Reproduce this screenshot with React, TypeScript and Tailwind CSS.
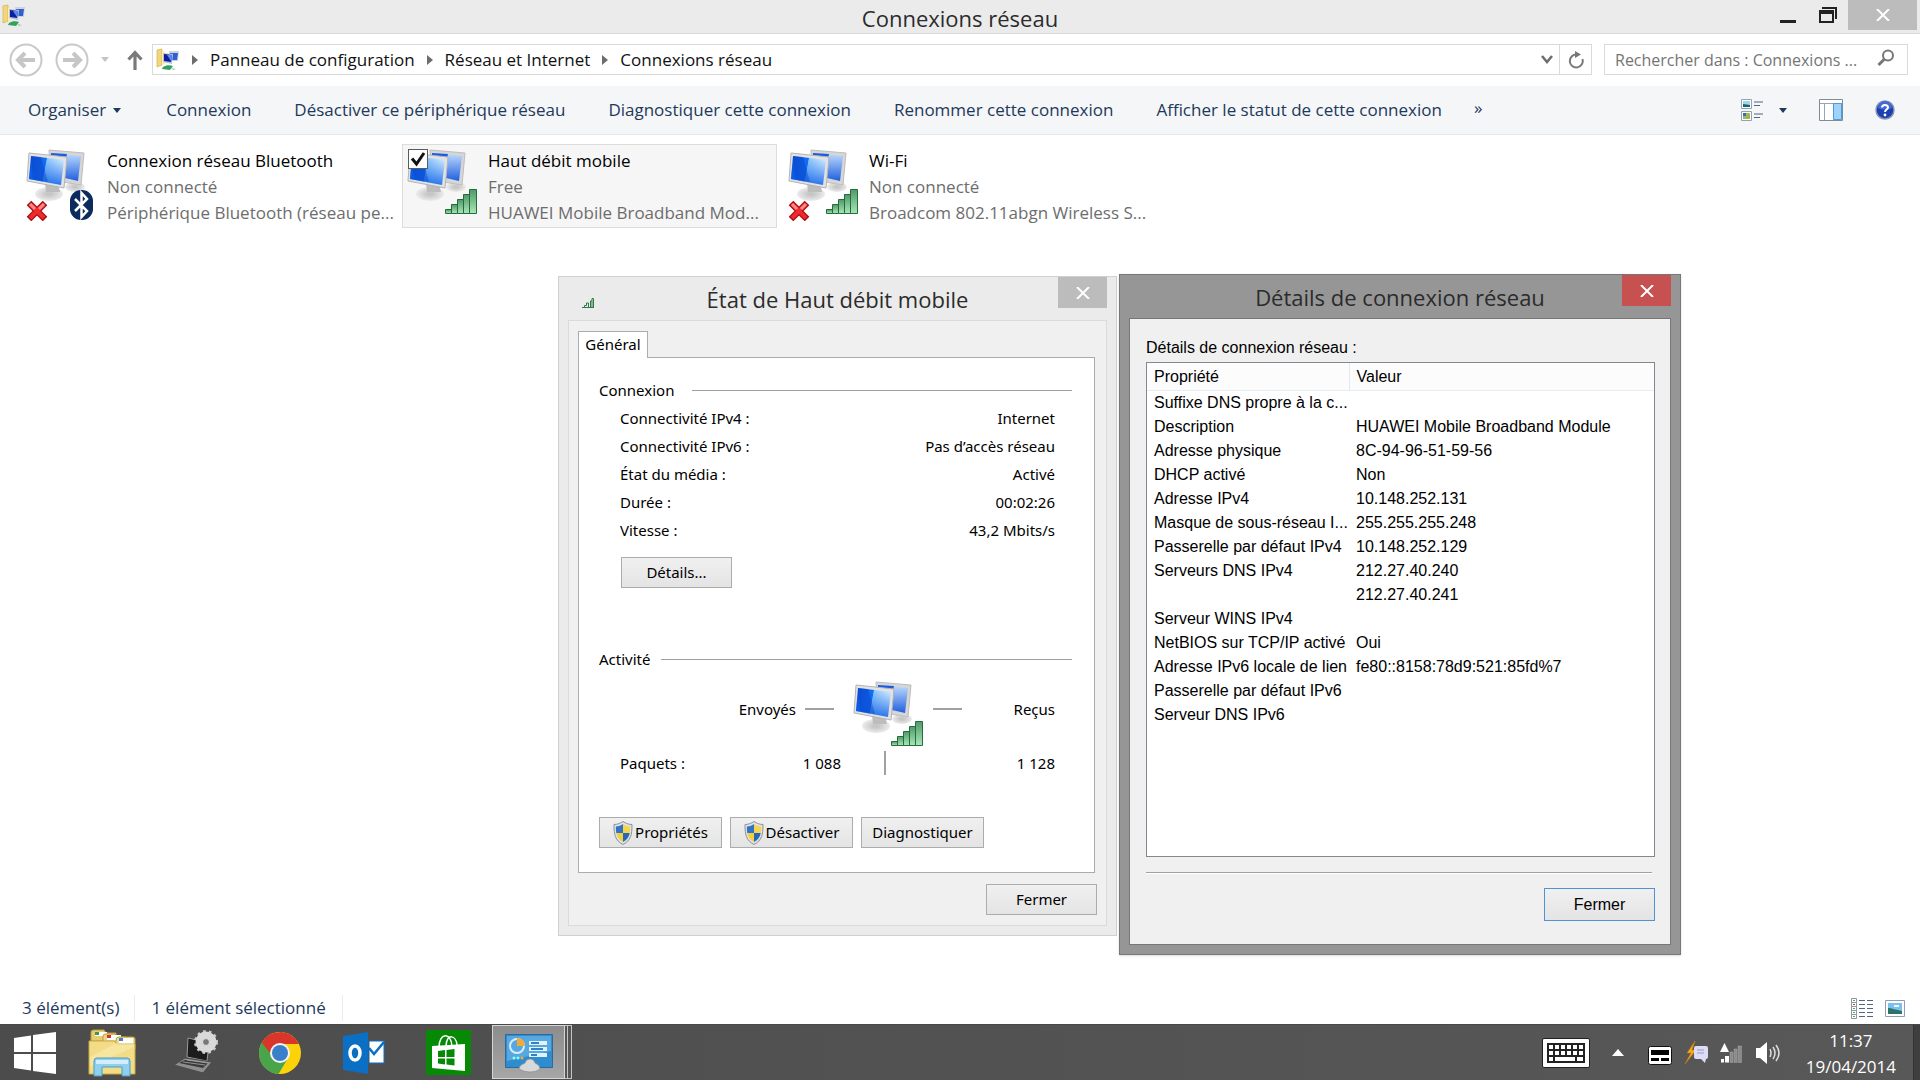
import { useState, type ReactNode } from "react";

const TOOLBAR = [
  "Connexion",
  "Désactiver ce périphérique réseau",
  "Diagnostiquer cette connexion",
  "Renommer cette connexion",
  "Afficher le statut de cette connexion",
];

const CRUMBS = ["Panneau de configuration", "Réseau et Internet", "Connexions réseau"];

type Badge = "bluetooth" | "bars";

type Connection = {
  name: string;
  status: string;
  device: string;
  badge: Badge;
  offline: boolean;
};

const CONNECTIONS: Connection[] = [
  { name: "Connexion réseau Bluetooth", status: "Non connecté", device: "Périphérique Bluetooth (réseau pe...", badge: "bluetooth", offline: true },
  { name: "Haut débit mobile", status: "Free", device: "HUAWEI Mobile Broadband Mod...", badge: "bars", offline: false },
  { name: "Wi-Fi", status: "Non connecté", device: "Broadcom 802.11abgn Wireless S...", badge: "bars", offline: true },
];

const STATUS_ROWS = [
  ["Connectivité IPv4 :", "Internet"],
  ["Connectivité IPv6 :", "Pas d’accès réseau"],
  ["État du média :", "Activé"],
  ["Durée :", "00:02:26"],
  ["Vitesse :", "43,2 Mbits/s"],
];

const DETAIL_ROWS = [
  ["Suffixe DNS propre à la c...", ""],
  ["Description", "HUAWEI Mobile Broadband Module"],
  ["Adresse physique", "8C-94-96-51-59-56"],
  ["DHCP activé", "Non"],
  ["Adresse IPv4", "10.148.252.131"],
  ["Masque de sous-réseau I...", "255.255.255.248"],
  ["Passerelle par défaut IPv4", "10.148.252.129"],
  ["Serveurs DNS IPv4", "212.27.40.240"],
  ["", "212.27.40.241"],
  ["Serveur WINS IPv4", ""],
  ["NetBIOS sur TCP/IP activé", "Oui"],
  ["Adresse IPv6 locale de lien", "fe80::8158:78d9:521:85fd%7"],
  ["Passerelle par défaut IPv6", ""],
  ["Serveur DNS IPv6", ""],
];

/* ---------- icons ---------- */

function NetworkIcon({ badge, offline }: { badge: Badge; offline?: boolean }) {
  return (
    <svg viewBox="0 0 72 72" className="size-[72px] shrink-0" aria-hidden="true">
      <defs>
        <linearGradient id="net-front" x1="0" y1="0" x2="1" y2="0.15">
          <stop offset="0" stopColor="#0a4fdc" />
          <stop offset="0.5" stopColor="#1470f4" />
          <stop offset="0.52" stopColor="#8cc8fc" />
          <stop offset="1" stopColor="#d8edfe" />
        </linearGradient>
        <linearGradient id="net-shade" x1="0" y1="0" x2="0" y2="1">
          <stop offset="0.1" stopColor="#0b5fe8" stopOpacity="0" />
          <stop offset="1" stopColor="#0b5fe8" stopOpacity="0.85" />
        </linearGradient>
        <linearGradient id="net-back" x1="0" y1="0" x2="0" y2="1">
          <stop offset="0" stopColor="#c2dcfb" />
          <stop offset="1" stopColor="#1f5fe0" />
        </linearGradient>
        <linearGradient id="net-bars" x1="0" y1="0" x2="0" y2="1">
          <stop offset="0" stopColor="#4f9a68" />
          <stop offset="1" stopColor="#a9e6b8" />
        </linearGradient>
        <radialGradient id="net-stand">
          <stop offset="0.2" stopColor="#c6c6c6" />
          <stop offset="1" stopColor="#ececec" />
        </radialGradient>
      </defs>
      <ellipse cx="50" cy="38" rx="10" ry="5" fill="url(#net-stand)" />
      <path d="M24 1 59 4 56 36 26 31z" fill="#d6d6d6" stroke="#bdbdbd" />
      <path d="M26 4 56 7 53 32 40 29z" fill="url(#net-back)" />
      <path d="M26 4 42 5 41 9 26 8z" fill="#1b5be0" />
      <ellipse cx="24" cy="45" rx="14" ry="7" fill="url(#net-stand)" />
      <path d="M20 34h13l2 9H21z" fill="#bdbdbd" />
      <path d="M4 4 42 8 39 39 2 32z" fill="#e2e2e2" stroke="#b4b4b4" />
      <path d="M6 7 39 11 36 36 4 30z" fill="url(#net-front)" />
      <path d="M6 7 39 11 36 36 4 30z" fill="url(#net-shade)" />
      <path d="M6 7 16 8l7 25L8 30z" fill="#0a3fc0" fillOpacity="0.4" />
      {badge === "bars" && (
        <g fill="url(#net-bars)" stroke="#256b3d">
          <path d="M39.500 60.500h6v4h-6z" />
          <path d="M45.500 55.500h6v9h-6z" />
          <path d="M51.500 50.500h6v14h-6z" />
          <path d="M57.500 45.500h6v19h-6z" />
          <path d="M63.500 40.500h7v24h-7z" />
        </g>
      )}
      {badge === "bluetooth" && (
        <>
          <rect x="45" y="41" width="23" height="30" rx="11" fill="#0b2a5e" />
          <path d="M50 50 62 62 56.500 68V44l5.500 6-12 12" fill="none" stroke="#fff" strokeWidth="2.500" />
        </>
      )}
      {offline && (
        <>
          <path d="M4 54 20 70M20 54 4 70" stroke="#a80d12" strokeWidth="6.500" />
          <path d="M5 55 19 69M19 55 5 69" stroke="#ee2a2d" strokeWidth="4" />
          <path d="M5 55l5 5M19 55l-5 5" stroke="#f88" strokeWidth="3" />
        </>
      )}
    </svg>
  );
}

function FolderNetIcon() {
  return (
    <svg viewBox="0 0 24 24" className="size-6 shrink-0" aria-hidden="true">
      <path d="M1 2 6 1v16l-5 2z" fill="#f1d67c" stroke="#d3b14e" strokeWidth="0.700" />
      <path d="M6 4l3-1v13l-3 1z" fill="#fbecb0" />
      <path d="M13 3h10l-1 10h-9z" fill="#ccd3df" />
      <path d="M14 5h8l-1 7h-7z" fill="#2f5fd0" />
      <path d="M7 5 17 6l-1 10-9-2z" fill="#b8c2d4" />
      <path d="M8 6 16 7l-1 7-7-1z" fill="#0b1fa0" />
      <path d="M11 7 16 7l-1 6z" fill="#5a8df0" />
      <path d="M7 19c3-2 7-2 10-1l-3 4-8-1z" fill="#2fa35a" />
      <path d="M15 20l5 1-3 1z" fill="#9bc9aa" />
    </svg>
  );
}

function CloseX() {
  return (
    <svg viewBox="0 0 14 12" className="h-3 w-3.5" aria-hidden="true">
      <path d="M1 0 13 12M13 0 1 12" stroke="#fff" strokeWidth="2" />
    </svg>
  );
}

function Shield() {
  return (
    <svg viewBox="0 0 20 24" className="h-6 w-5 shrink-0" aria-hidden="true">
      <path d="M10 .5c3 2 6 3 9 3 0 10-1 16-9 20C2 19.500 1 13.500 1 3.500c3 0 6-1 9-3z" fill="#dfe3e6" stroke="#8b9298" />
      <path d="M10 3v9H3.300C3 10 2.800 8 2.900 5.500 6 5.200 8 4.500 10 3z" fill="#2f74c8" />
      <path d="M10 3v9h6.700c.3-2 .5-4 .4-6.500C14 5.200 12 4.500 10 3z" fill="#f6d44c" />
      <path d="M10 12v9c-4-2.200-6-5-6.700-9z" fill="#f3cf42" />
      <path d="M10 12v9c4-2.200 6-5 6.700-9z" fill="#2767b8" />
    </svg>
  );
}

function CaretDown({ color }: { color: string }) {
  return (
    <svg viewBox="0 0 8 5" className="h-[5px] w-2" aria-hidden="true">
      <path d="M0 0h8L4 5z" fill={color} />
    </svg>
  );
}

function NavCircle({ label, flip }: { label: string; flip?: boolean }) {
  return (
    <button aria-label={label} className="block size-[34px] shrink-0">
      <svg viewBox="0 0 34 34" className={flip ? "block size-[34px] -scale-x-100" : "block size-[34px]"}>
        <circle cx="17" cy="17" r="15.500" fill="none" stroke="#c9c9c9" strokeWidth="2" />
        <path d="M9 17h17M16 10l-7 7 7 7" fill="none" stroke="#c6c6c6" strokeWidth="4" />
      </svg>
    </button>
  );
}

/* ---------- main window ---------- */

function TitleBar() {
  return (
    <header className="grid h-[34px] grid-cols-[1fr_auto_1fr] border-b border-[#d8d8d8] bg-[#ebebeb]">
      <div className="pt-1 pl-[2px]">
        <FolderNetIcon />
      </div>
      <h1 className="text-[22px] leading-9 text-[#2b2b2b]">Connexions réseau</h1>
      <div className="flex justify-end pr-[3px]">
        <button aria-label="Réduire" className="flex h-[30px] w-10 items-center justify-center">
          <span className="mt-3 h-[3px] w-4 bg-[#222]" />
        </button>
        <button aria-label="Restaurer" className="flex h-[30px] w-10 items-center justify-center">
          <svg viewBox="0 0 18 16" className="h-4 w-[18px]">
            <path d="M3 1h14v11" fill="none" stroke="#222" strokeWidth="2" />
            <path d="M1 4h13v11H1z" fill="none" stroke="#222" strokeWidth="2" />
            <path d="M0 3h15v4H0z" fill="#222" />
          </svg>
        </button>
        <button aria-label="Fermer" className="flex h-[30px] w-[69px] items-center justify-center bg-[#bcbcbc]">
          <CloseX />
        </button>
      </div>
    </header>
  );
}

function AddressRow() {
  return (
    <div className="flex h-[52px] items-center pr-3 pb-px pl-[9px]">
      <NavCircle label="Précédent" />
      <div className="ml-3">
        <NavCircle label="Suivant" flip />
      </div>
      <button aria-label="Emplacements récents" className="ml-2 flex w-4 justify-center">
        <CaretDown color="#c4c4c4" />
      </button>
      <button aria-label="Dossier parent" className="ml-3.5">
        <svg viewBox="0 0 16 20" className="h-5 w-4">
          <path d="M8 20V3M1.500 9.500 8 2.500l6.500 7" fill="none" stroke="#7a7a7a" strokeWidth="3.200" />
        </svg>
      </button>
      <nav className="ml-[9px] flex h-[31px] flex-1 items-center border border-[#d9d9d9] bg-white pl-[3px]">
        <FolderNetIcon />
        {CRUMBS.map((crumb) => (
          <span key={crumb} className="flex items-center">
            <svg viewBox="0 0 6 10" className="mr-3 ml-3 h-2.5 w-1.5" aria-hidden="true">
              <path d="M0 0v10l6-5z" fill="#6d6d6d" />
            </svg>
            <a href="#" className="text-[17px] leading-7 text-[#111]">{crumb}</a>
          </span>
        ))}
        <button aria-label="Adresses précédentes" className="mr-1.5 ml-auto">
          <svg viewBox="0 0 12 9" className="h-[9px] w-3">
            <path d="M1 1l5 6 5-6" fill="none" stroke="#6d6d6d" strokeWidth="2.500" />
          </svg>
        </button>
        <button aria-label="Actualiser" className="flex h-full w-8 items-center justify-center border-l border-[#d9d9d9]">
          <svg viewBox="0 0 18 18" className="size-[18px]">
            <path d="M10 3.500A6.500 6.500 0 1 0 15.500 8" fill="none" stroke="#777" strokeWidth="2" />
            <path d="M8 0v7l6-3.500z" fill="#777" />
          </svg>
        </button>
      </nav>
      <div className="ml-3 flex h-[31px] w-[304px] items-center border border-[#d9d9d9] bg-white pr-3 pl-2.5">
        <input
          type="text"
          aria-label="Rechercher"
          placeholder="Rechercher dans : Connexions ..."
          className="min-w-0 flex-1 text-[16px] outline-none placeholder:text-[#757575]"
        />
        <svg viewBox="0 0 18 18" className="mb-1 size-[18px] shrink-0" aria-hidden="true">
          <circle cx="11" cy="6.500" r="5" fill="none" stroke="#777" strokeWidth="2" />
          <path d="M7.500 10 1.500 16" stroke="#777" strokeWidth="3" />
        </svg>
      </div>
    </div>
  );
}

function CommandBar() {
  return (
    <div className="flex h-[49px] items-center border-b border-[#e5e7ea] bg-[#f4f6f8] pr-[25px] pl-7 text-[17px] text-[#1e395b]">
      <button className="flex items-center gap-[7px]">
        Organiser
        <CaretDown color="#1e395b" />
      </button>
      <div className="ml-[45px] flex gap-[43px]">
        {TOOLBAR.map((label) => (
          <button key={label}>{label}</button>
        ))}
      </div>
      <button aria-label="Autres commandes" className="ml-8 pb-1">»</button>

      <button aria-label="Changer l’affichage" className="ml-auto flex items-center gap-[15px]">
        <svg viewBox="0 0 23 22" className="h-[22px] w-[23px]">
          <path d="M.5.5h10v9H.5zM.5 12.500h10v9H.5z" fill="#fff" stroke="#8fa3b4" />
          <path d="M2 2h7v6H2z" fill="#9fd6ea" />
          <path d="M2 5l7 1v2H2z" fill="#20606e" />
          <path d="M2 14h7v6H2z" fill="#8fc06a" />
          <path d="M2 14h3v3H2z" fill="#4468b0" />
          <path d="M6 16h3v3H6z" fill="#c8a040" />
          <path d="M13 3h9M13 6.500h6M13 15h9M13 18.500h6" stroke="#51657c" />
        </svg>
        <CaretDown color="#1e395b" />
      </button>
      <button aria-label="Volet de visualisation" className="ml-8">
        <svg viewBox="0 0 24 22" className="h-[22px] w-6">
          <path d="M.5.5h23v21H.5z" fill="#fff" stroke="#7f8b97" />
          <path d="M1 4.500h22M5.500 5v16" stroke="#9aa5b0" />
          <path d="M14.500 4.500h8v16h-8z" fill="#9fd3fa" stroke="#4b9be0" />
        </svg>
      </button>
      <button aria-label="Aide" className="ml-8">
        <svg viewBox="0 0 20 20" className="size-5">
          <circle cx="10" cy="10" r="9" fill="#1c3fb4" stroke="#8893b0" strokeWidth="1.500" />
          <path d="M3 8a7 7 0 0 1 14 0c-4 2-10 2-14 0z" fill="#4468d4" />
          <path d="M7 7.500C7 4 13 4 13 7.500c0 2-3 2.200-3 4.500" fill="none" stroke="#fff" strokeWidth="2" />
          <circle cx="10" cy="15" r="1.400" fill="#fff" />
        </svg>
      </button>
    </div>
  );
}

function ConnectionItem({ item, selected, onToggle }: { item: Connection; selected: boolean; onToggle: () => void }) {
  return (
    <li
      className={
        selected
          ? "relative flex h-[84px] w-[375px] border border-[#dcdcdc] bg-[#f6f6f6] pt-[3px] pl-[3px]"
          : "relative flex h-[84px] w-[375px] border border-transparent pt-[3px] pl-[3px]"
      }
    >
      <div className="pt-px">
        <NetworkIcon badge={item.badge} offline={item.offline} />
      </div>
      {selected && (
        <label className="absolute top-1 left-[5px] flex">
          <input type="checkbox" aria-label={item.name} checked onChange={onToggle} className="size-5 appearance-none border border-[#5a5a5a] bg-white" />
          <svg viewBox="0 0 20 20" className="pointer-events-none absolute inset-0 size-5">
            <path d="M4 9.500l4.500 5.500L16 4" fill="none" stroke="#111" strokeWidth="3" />
          </svg>
        </label>
      )}
      <div className="ml-2.5 text-[17px] leading-[26px] text-[#6d6d6d]" onClick={onToggle}>
        <p className="text-black">{item.name}</p>
        <p>{item.status}</p>
        <p className="whitespace-nowrap">{item.device}</p>
      </div>
    </li>
  );
}

function StatusBar() {
  return (
    <footer className="flex h-8 items-center pr-[15px] pl-[22px] text-[17px] text-[#1e395b]">
      <span className="border-r border-[#ececec] pr-[15px]">3 élément(s)</span>
      <span className="border-r border-[#ececec] px-4">1 élément sélectionné</span>
      <button aria-label="Détails" className="ml-auto">
        <svg viewBox="0 0 22 21" className="h-[21px] w-[22px]">
          {[0, 4, 8, 12, 16].map((y) => (
            <g key={y}>
              <path d={`M.5 ${y + 0.5}h5v4h-5z`} fill="#fff" stroke="#8c97a3" />
              <path d={`M2 ${y + 2}h2v1H2z`} fill={y === 4 ? "#c43c3c" : "#57a05c"} />
              <path d={`M8 ${y + 2.5}h6M16 ${y + 2.5}h6`} stroke="#51657c" />
            </g>
          ))}
        </svg>
      </button>
      <button aria-label="Grandes icônes" className="ml-3">
        <svg viewBox="0 0 20 17" className="h-[17px] w-5">
          <path d="M.5.5h19v16H.5z" fill="#fff" stroke="#8ba0b8" />
          <path d="M3 3h14v11H3z" fill="#7cc0f0" />
          <path d="M3 8c4 0 8 2 14 3v3H3z" fill="#2c7468" />
          <path d="M9 5h5v2H9z" fill="#e8f6ff" />
        </svg>
      </button>
    </footer>
  );
}

/* ---------- dialogs ---------- */

function DialogButton({ children, className }: { children: ReactNode; className: string }) {
  return (
    <button className={`flex items-center justify-center border bg-linear-to-b from-[#f0f0f0] to-[#e4e4e4] ${className}`}>
      {children}
    </button>
  );
}

function GroupTitle({ children, className }: { children: ReactNode; className?: string }) {
  return (
    <h3 className={`flex h-7 items-center ${className ?? ""}`}>
      {children}
      <span className="h-px flex-1 bg-[#a0a0a0]" />
    </h3>
  );
}

function StatusDialog() {
  return (
    <section
      role="dialog"
      aria-label="État de Haut débit mobile"
      className="absolute top-[276px] left-[558px] w-[559px] border border-[#d0d0d0] bg-[#ebebeb] px-[9px] pb-[9px] font-['Noto_Sans',sans-serif] text-[15px] text-black"
    >
      <header className="grid h-[43px] grid-cols-[49px_1fr_49px]">
        <svg viewBox="0 0 12 10" className="mt-[21px] ml-3.5 h-2.5 w-3" aria-hidden="true">
          <path d="M0 9.500h12M2.500 9V7.500h2V5h2v4M8.500 9V3h1.500v6M10 3V.5h1.500V9" fill="none" stroke="#2f7a48" />
        </svg>
        <h2 className="pt-0.5 text-center font-['Open_Sans',sans-serif] text-[22px] leading-10 text-[#2b2b2b]">État de Haut débit mobile</h2>
        <button aria-label="Fermer la fenêtre" className="flex h-[31px] items-center justify-center bg-[#bcbcbc]">
          <CloseX />
        </button>
      </header>
      <div className="border border-[#dadada] bg-[#f0f0f0] py-2.5 pr-[9px] pl-[9px]">
        <button role="tab" aria-selected className="relative -mb-px flex h-[27px] w-[70px] items-center justify-center border border-b-0 border-[#acacac] bg-white pb-0.5">
          Général
        </button>
        <div className="mr-0.5 border border-[#acacac] bg-white pt-[18px] pr-[22px] pb-6 pl-5">
          <GroupTitle>
            <span className="mr-[18px]">Connexion</span>
          </GroupTitle>
          <dl className="pr-[17px] pl-[21px]">
            {STATUS_ROWS.map(([label, value]) => (
              <div key={label} className="flex h-7 items-center justify-between">
                <dt>{label}</dt>
                <dd>{value}</dd>
              </div>
            ))}
          </dl>
          <DialogButton className="mt-[13px] ml-[22px] h-[31px] w-[111px] border-[#acacac]">Détails...</DialogButton>

          <GroupTitle className="mt-[57px]">
            <span className="mr-[11px]">Activité</span>
          </GroupTitle>
          <div className="grid h-[76px] grid-cols-[235px_99px_1fr] pr-[17px]">
            <div className="flex h-[72px] items-center justify-end gap-[9px]">
              Envoyés
              <span className="h-0.5 w-[29px] bg-[#a0a0a0]" />
            </div>
            <div className="flex pt-2 pl-[18px]">
              <NetworkIcon badge="bars" />
            </div>
            <div className="flex h-[72px] items-center justify-between">
              <span className="h-0.5 w-[29px] bg-[#a0a0a0]" />
              Reçus
            </div>
          </div>
          <div className="grid h-7 grid-cols-[88px_133px_88px_1fr] items-center pr-[17px] pl-[21px]">
            <span>Paquets :</span>
            <span className="text-right">1 088</span>
            <span className="h-6 w-0.5 justify-self-center bg-[#a0a0a0]" />
            <span className="text-right">1 128</span>
          </div>
          <div className="mt-10 flex gap-2">
            <DialogButton className="h-[31px] w-[123px] border-[#acacac]">
              <Shield />
              <span className="ml-0.5">Propriétés</span>
            </DialogButton>
            <DialogButton className="h-[31px] w-[123px] border-[#acacac]">
              <Shield />
              <span className="ml-0.5">Désactiver</span>
            </DialogButton>
            <DialogButton className="h-[31px] w-[123px] border-[#acacac]">Diagnostiquer</DialogButton>
          </div>
        </div>
        <DialogButton className="mt-[11px] ml-auto h-[31px] w-[111px] border-[#acacac]">Fermer</DialogButton>
      </div>
    </section>
  );
}

function DetailsDialog() {
  return (
    <section
      role="dialog"
      aria-label="Détails de connexion réseau"
      className="absolute top-[274px] left-[1119px] w-[562px] border border-[#777] bg-[#969696] px-[9px] pb-[9px] font-['Liberation_Sans',Arial,sans-serif] text-[16px] text-black shadow-sm"
    >
      <header className="grid h-[43px] grid-cols-[49px_1fr_49px]">
        <h2 className="col-start-2 pt-0.5 text-center font-['Open_Sans',sans-serif] text-[22px] leading-10 text-[#2b2b2b]">Détails de connexion réseau</h2>
        <button aria-label="Fermer la fenêtre" className="flex h-[31px] items-center justify-center bg-[#c75050]">
          <CloseX />
        </button>
      </header>
      <div className="border border-[#777] bg-[#f0f0f0] pt-[17px] pr-[15px] pb-[23px] pl-4">
        <p className="h-6 leading-6">Détails de connexion réseau :</p>
        <div className="mt-0.5 h-[495px] border border-[#828790] bg-white">
          <table className="w-full table-fixed text-left">
            <thead>
              <tr className="h-[27px] border-b border-[#e6eef6] bg-[#fcfcfd]">
                <th className="w-[202px] border-r border-[#dfeaf4] pt-0.5 pr-0 pb-0 pl-[7px] font-normal">Propriété</th>
                <th className="pt-0.5 pr-0 pb-0 pl-[7px] font-normal">Valeur</th>
              </tr>
            </thead>
            <tbody>
              {DETAIL_ROWS.map(([label, value], i) => (
                <tr key={i} className="h-6 leading-6 whitespace-nowrap">
                  <td className="p-0 pl-[7px]">{label}</td>
                  <td className="p-0 pl-[7px]">{value}</td>
                </tr>
              ))}
            </tbody>
          </table>
        </div>
        <hr className="mt-[15px] mr-[3px] h-0.5 border-t border-b border-t-[#a0a0a0] border-b-white" />
        <DialogButton className="mt-3.5 ml-auto h-[33px] w-[111px] border-[#5292d4]">Fermer</DialogButton>
      </div>
    </section>
  );
}

/* ---------- taskbar ---------- */

function TaskButton({ label, children }: { label: string; children: ReactNode }) {
  return (
    <button aria-label={label} className="flex h-full w-[84px] items-center justify-center">
      {children}
    </button>
  );
}

function Taskbar() {
  return (
    <div className="flex h-14 items-stretch border-t border-[#484848] bg-linear-to-r from-[#4c4c4c] to-[#585858] text-white">
      <button aria-label="Démarrer" className="flex w-[70px] items-center justify-center">
        <svg viewBox="0 0 42 42" className="size-[42px]" fill="#fff">
          <path d="M0 6 17 3.500V20H0zM19 3 42 0v20H19zM0 22h17v16.500L0 36zM19 22h23v20l-23-3z" />
        </svg>
      </button>
      <TaskButton label="Explorateur de fichiers">
        <svg viewBox="0 0 48 48" className="size-12">
          <path d="M3 3q0-2 3-2h10l2 3h10v8H3z" fill="#e8cc74" stroke="#bf9b3c" />
          <path d="M7 3h12v4H7z" fill="#fff" />
          <path d="M7 3h4v3H7z" fill="#3a9a4a" />
          <path d="M15 7q0-2 3-2h9l3 3h8v6H15z" fill="#efd684" stroke="#bf9b3c" />
          <path d="M19 6h14v5H19z" fill="#fff" />
          <path d="M19 6h4v3h-4z" fill="#d0372f" />
          <path d="M28 11q0-3 3-3h14q2 0 2 2v10H28z" fill="#f2dd92" stroke="#bf9b3c" />
          <path d="M31 9h14v5H31z" fill="#fff" />
          <path d="M31 9h4v3h-4z" fill="#3a86c8" />
          <path d="M1 12h25l3 3h18v30H1z" fill="#f3dc87" stroke="#caa748" />
          <path d="M2 28 28 14h18v4L2 38z" fill="#fbefb8" fillOpacity="0.500" />
          <path d="M6 47V32q0-3 3-3h30q3 0 3 3v15h-8v-9H14v9z" fill="#8fd0ee" stroke="#4d9cc4" />
          <path d="M8 31h32v4H8z" fill="#d3eefa" />
        </svg>
      </TaskButton>
      <TaskButton label="Gestionnaire de périphériques">
        <svg viewBox="0 0 46 46" className="size-[46px]">
          <path d="M15 8 36 13 34 31 14 27z" fill="#1c1c1c" stroke="#9a9a9a" />
          <path d="M12 28 39 32 30 43 1 35z" fill="#8e8e8e" stroke="#4a4a4a" />
          <path d="M12 30 35 33 30 38 6 33z" fill="#3a3a3a" />
          <path d="M10 32l22 3M14 30l21 3" stroke="#a8a8a8" strokeWidth="0.800" />
          <circle cx="33" cy="12" r="10" fill="none" stroke="#c9c9c9" strokeWidth="4" strokeDasharray="2.500 3" />
          <circle cx="33" cy="12" r="7" fill="none" stroke="#d9d9d9" strokeWidth="7" />
          <circle cx="33" cy="12" r="3.500" fill="#777" stroke="#eee" />
        </svg>
      </TaskButton>
      <TaskButton label="Google Chrome">
        <svg viewBox="0 0 42 42" className="size-[42px]">
          <circle cx="21" cy="21" r="21" fill="#fcd209" />
          <path d="M21 0a21 21 0 0 1 18.600 12H21z" fill="#d9352a" />
          <path d="M2.800 10.500A21 21 0 0 0 19.500 42L29 26 21 21z" fill="#4aa54a" />
          <path d="M2.800 10.500A21 21 0 0 1 39.600 12H21q-9 1-10 9z" fill="#d9352a" />
          <circle cx="21" cy="21" r="10" fill="#f4f4f4" />
          <circle cx="21" cy="21" r="8" fill="#3b7fcb" />
        </svg>
      </TaskButton>
      <TaskButton label="Outlook">
        <svg viewBox="0 0 42 42" className="size-[42px]">
          <path d="M0 4 25 0v42L0 38z" fill="#0b6fc4" />
          <ellipse cx="12" cy="21" rx="5" ry="7" fill="none" stroke="#fff" strokeWidth="3.500" />
          <path d="M26 9h15v22H26z" fill="#fff" stroke="#0b6fc4" />
          <path d="M26 16l5 6 10-12" fill="none" stroke="#0b6fc4" strokeWidth="2.500" />
        </svg>
      </TaskButton>
      <TaskButton label="Windows Store">
        <svg viewBox="0 0 45 45" className="size-[45px]">
          <path d="M0 0h45v45H0z" fill="#068a06" />
          <path d="M13 18c0-16 12-16 13-2M20 16c1-13 10-11 11-1" fill="none" stroke="#fff" strokeWidth="1.500" />
          <path d="M6 16 39 14v27L6 38z" fill="#fff" />
          <path d="M12 21l7-1v7h-7zM20.500 20l8-1v8h-8zM12 28.500h7v6l-7-1zM20.500 28.500h8v7l-8-1z" fill="#068a06" />
        </svg>
      </TaskButton>
      <button aria-label="Panneau de configuration" className="mb-px ml-0.5 flex w-20">
        <span className="flex h-full w-[73px] items-center justify-center border border-[#d5d5d5] bg-linear-to-b from-[#8c8c8c] to-[#a6a6a6]">
          <svg viewBox="0 0 48 42" className="h-[42px] w-12">
            <path d="M.5 3.500h47v33H.5z" fill="#2f8ccf" stroke="#2b6a9c" />
            <path d="M2 5h44v15L2 30z" fill="#58a8e0" />
            <circle cx="12" cy="15" r="7" fill="none" stroke="#d6eefc" strokeWidth="2" />
            <path d="M12 15V7a8 8 0 0 1 8 8z" fill="#f3a83a" />
            <path d="M24 10h18v4H24zM24 16h18v4H24zM24 22h18v4H24z" fill="#dff1fc" />
            <path d="M26 11h8v2h-8zM26 17h12v2H26zM26 23h6v2h-6z" fill="#2f84c8" />
            <circle cx="9" cy="27" r="1.500" fill="#8ff" />
            <circle cx="13" cy="27" r="1.500" fill="#8ff" />
            <circle cx="17" cy="27" r="1.500" fill="#f3a83a" />
            <path d="M14 38q0-4 6-6 1-4 5-4t5 4q5 2 5 6-4 3-10 3t-11-3z" fill="#d9d9d9" stroke="#8a8a8a" strokeWidth="0.600" />
          </svg>
        </span>
        <span className="h-full w-[3px] border-y border-r border-[#c4c4c4] bg-[#555]" />
        <span className="h-full w-1 border-y border-r border-[#c4c4c4] bg-[#555]" />
      </button>

      <div className="ml-auto flex items-center">
        <button aria-label="Clavier tactile">
          <svg viewBox="0 0 48 30" className="h-[30px] w-12">
            <rect x="0.500" y="0.500" width="47" height="29" rx="1.500" fill="#fff" stroke="#222" />
            <path d="M5 5h38v20H5z" fill="#222" />
            <path d="M7 9h34M7 15h34" stroke="#fff" strokeWidth="4" strokeDasharray="4 2" />
            <path d="M7 19h4v4H7zM13 19h20v4H13zM35 19h6v4h-6z" fill="#fff" />
          </svg>
        </button>
        <button aria-label="Afficher les icônes cachées" className="ml-[22px]">
          <svg viewBox="0 0 12 8" className="h-2 w-3">
            <path d="M0 7 6 0l6 7z" fill="#fff" />
          </svg>
        </button>
        <svg viewBox="0 0 24 19" className="mt-1.5 ml-6 h-[19px] w-6" aria-hidden="true">
          <rect x="0.500" y="0.500" width="23" height="18" rx="2" fill="#fff" stroke="#111" />
          <path d="M3 4h18v5H3zM3 12h8v3H3zM13 12h8v3h-8z" fill="#000" />
        </svg>
        <svg viewBox="0 0 24 24" className="ml-3 size-6" aria-hidden="true">
          <path d="M11 0 3 12h4L1 23l11-14H8z" fill="#f6a821" stroke="#c9760c" strokeWidth="0.600" />
          <path d="M12 5h10q2 0 2 2v9q0 2-2 2l-1 4-4-4h-5q-2 0-2-2V7q0-2 2-2z" fill="#dcdcf4" />
          <path d="M13 9h7M13 12h7" stroke="#9a9ac8" />
        </svg>
        <svg viewBox="0 0 22 20" className="ml-3 h-5 w-[22px]" aria-hidden="true">
          <path d="M0 9 4.500 0 9 9z" fill="#fff" />
          <path d="M1 16h3v3.500H1zM5 13h4v6.500H5z" fill="#fff" />
          <path d="M10 9h3v10.500h-3zM14 6h3v13.500h-3zM18 3h3.500v16.500H18z" fill="#8a8a8a" stroke="#a5a5a5" strokeWidth="0.500" />
        </svg>
        <button aria-label="Volume" className="ml-3.5">
          <svg viewBox="0 0 24 22" className="h-[22px] w-6">
            <path d="M0 6h4l7-6v22l-7-6H0z" fill="#fff" />
            <path d="M14 7q2 4 0 8M17 5q4 6 0 12M20 3q6 8 0 16" fill="none" stroke="#ddd" strokeWidth="1.500" />
          </svg>
        </button>
        <time className="ml-[26px] pt-[3px] text-center text-[17px] leading-[26px]">
          <span className="block">11:37</span>
          <span className="block">19/04/2014</span>
        </time>
        <button aria-label="Afficher le bureau" className="ml-[17px] h-full w-[7px] border-l border-[#333] bg-[#3f3f3f]" />
      </div>
    </div>
  );
}

export default function App() {
  const [selected, setSelected] = useState("Haut débit mobile");

  return (
    <div className="relative flex min-h-screen flex-col overflow-hidden bg-white font-['Open_Sans',sans-serif]">
      <TitleBar />
      <AddressRow />
      <CommandBar />
      <main className="flex-1 pt-[9px] pl-[21px]">
        <ul className="flex gap-1.5">
          {CONNECTIONS.map((item) => (
            <ConnectionItem
              key={item.name}
              item={item}
              selected={selected === item.name}
              onToggle={() => setSelected(selected === item.name ? "" : item.name)}
            />
          ))}
        </ul>
      </main>
      <StatusBar />
      <Taskbar />
      <StatusDialog />
      <DetailsDialog />
    </div>
  );
}
